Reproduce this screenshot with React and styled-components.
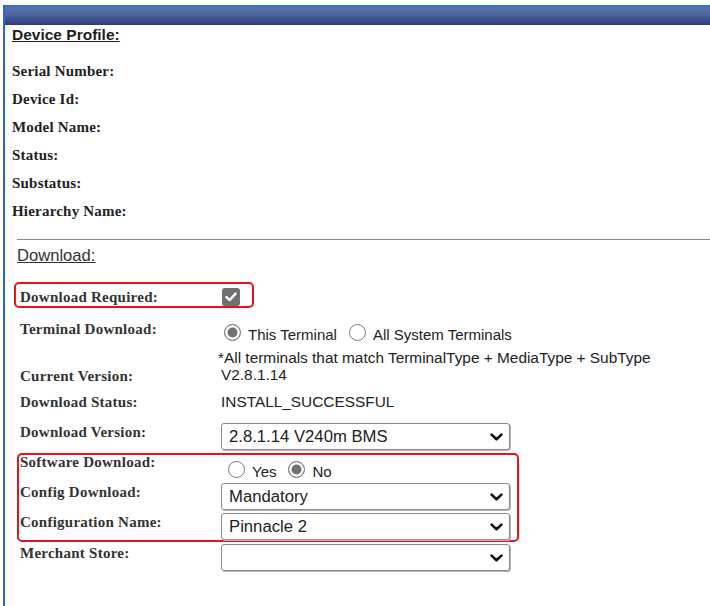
import React from "react";
import styled, { createGlobalStyle } from "styled-components";

const GlobalStyle = createGlobalStyle`
  html, body {
    margin: 0;
    padding: 0;
    background: #fff;
  }
  body {
    font-family: "Liberation Sans", Arial, sans-serif;
    color: #222;
  }
`;

const Frame = styled.div`
  margin: 5px 0 0 3px;
  border-left: 2px solid #2d67cc;
  min-height: 601px;
  box-sizing: border-box;
`;

const TitleBar = styled.div`
  height: 20px;
  box-sizing: border-box;
  border-top: 2px solid #3a6fc6;
  background: linear-gradient(to bottom, #5b74aa 0%, #4b63a0 45%, #2a3a78 100%);
`;

const ProfileTitle = styled.h2`
  margin: 0 0 12px 7px;
  font: bold 15.5px/20px "Liberation Sans", Arial, sans-serif;
  text-decoration: underline;
  color: #1e1e1e;
`;

const InfoList = styled.div`
  padding-left: 7px;
  display: flex;
  flex-direction: column;
`;

const InfoLabel = styled.div`
  font: bold 15px/28px "Liberation Serif", "Times New Roman", serif;
  letter-spacing: 0.2px;
  color: #222;
`;

const Divider = styled.hr`
  margin: 14px 0 6px 12px;
  height: 0;
  border: 0;
  border-top: 1px solid #8a8a8a;
`;

const SectionTitle = styled.div`
  margin: 0 0 22px 12px;
  font: 16.6px/20px "Liberation Sans", Arial, sans-serif;
  text-decoration: underline;
  color: #333;
`;

const Form = styled.div`
  padding-left: 15px;
  display: flex;
  flex-direction: column;
`;

const Highlight = styled.div`
  position: relative;
`;

// red annotation frame drawn over the rows
const Marker = styled.span`
  position: absolute;
  pointer-events: none;
  box-sizing: border-box;
  border: 2px solid #e8121a;
  border-radius: 5px;
  top: ${(p) => p.$top}px;
  left: ${(p) => p.$left}px;
  width: ${(p) => p.$w}px;
  height: ${(p) => p.$h}px;
`;

const Row = styled.div`
  display: grid;
  grid-template-columns: 201px 1fr;
  align-items: start;
  height: ${(p) => p.$h}px;
`;

const Label = styled.div`
  font: bold 15px/18px "Liberation Serif", "Times New Roman", serif;
  letter-spacing: 0.25px;
  color: #333;
  padding-top: ${(p) => p.$top || 0}px;
`;

const Value = styled.div`
  font: 15.4px/17px "Liberation Sans", Arial, sans-serif;
  color: #222;
`;

const Note = styled.div`
  margin-left: -3px;
`;

const CheckBox = styled.span`
  display: flex;
  align-items: center;
  justify-content: center;
  width: 18px;
  height: 18px;
  margin-left: 1px;
  border-radius: 3px;
  background: #707070;
`;

const RadioGroup = styled.div`
  display: flex;
  align-items: center;
  gap: 12px;
  margin: ${(p) => p.$top}px 0 0 ${(p) => p.$indent}px;
  font-size: 15px;
`;

const Option = styled.label`
  display: flex;
  align-items: center;
  gap: 7px;
`;

const Radio = styled.span`
  width: 17px;
  height: 17px;
  box-sizing: border-box;
  border-radius: 50%;
  border: 1.5px solid #7a7a7a;
  margin-bottom: 4px;
  background: ${(p) => (p.$on ? "#727272" : "#fff")};
  box-shadow: ${(p) => (p.$on ? "inset 0 0 0 2.5px #fff" : "none")};
`;

const SelectWrap = styled.div`
  position: relative;
  width: 289px;
  height: 27px;
`;

const Select = styled.select`
  appearance: none;
  width: 100%;
  height: 100%;
  box-sizing: border-box;
  margin: 0;
  padding: 0 28px 0 7px;
  border: 1px solid #8a8a8a;
  border-radius: 3px;
  box-shadow: 1px 1px 0 #b8b8b8;
  background: #fff;
  font: 16.7px "Liberation Sans", Arial, sans-serif;
  color: #222;
  outline: none;
`;

const Chevron = styled.svg`
  position: absolute;
  right: 7px;
  top: 10px;
  pointer-events: none;
`;

function Dropdown({ value }) {
  return (
    <SelectWrap>
      <Select value={value} onChange={() => {}}>
        <option value={value}>{value}</option>
      </Select>
      <Chevron width="13" height="8" viewBox="0 0 13 8">
        <polyline
          points="1.6,1.6 6.5,6.3 11.4,1.6"
          fill="none"
          stroke="#111"
          strokeWidth="2.6"
          strokeLinecap="round"
          strokeLinejoin="round"
        />
      </Chevron>
    </SelectWrap>
  );
}

function Choice({ on, children }) {
  return (
    <Option>
      <Radio $on={on} />
      {children}
    </Option>
  );
}

const profileFields = [
  "Serial Number:",
  "Device Id:",
  "Model Name:",
  "Status:",
  "Substatus:",
  "Hierarchy Name:",
];

export default function App() {
  return (
    <>
      <GlobalStyle />
      <Frame>
        <TitleBar />
        <ProfileTitle>Device Profile:</ProfileTitle>
        <InfoList>
          {profileFields.map((f) => (
            <InfoLabel key={f}>{f}</InfoLabel>
          ))}
        </InfoList>

        <Divider />
        <SectionTitle>Download:</SectionTitle>

        <Form>
          <Highlight>
            <Marker $top={-6} $left={-6} $w={240} $h={26} />
            <Row $h={32}>
              <Label>Download Required:</Label>
              <CheckBox>
                <svg width="12" height="10" viewBox="0 0 12 10">
                  <polyline
                    points="1.5,5.2 4.6,8.2 10.5,1.6"
                    fill="none"
                    stroke="#fff"
                    strokeWidth="2.4"
                    strokeLinecap="round"
                    strokeLinejoin="round"
                  />
                </svg>
              </CheckBox>
            </Row>
          </Highlight>

          <Row $h={29}>
            <Label>Terminal Download:</Label>
            <Value>
              <RadioGroup $top={4} $indent={3}>
                <Choice on>This Terminal</Choice>
                <Choice>All System Terminals</Choice>
              </RadioGroup>
            </Value>
          </Row>

          <Row $h={44}>
            <Label $top={18}>Current Version:</Label>
            <Value>
              <Note>*All terminals that match TerminalType + MediaType + SubType</Note>
              <div>V2.8.1.14</div>
            </Value>
          </Row>

          <Row $h={30}>
            <Label>Download Status:</Label>
            <Value>INSTALL_SUCCESSFUL</Value>
          </Row>

          <Row $h={30}>
            <Label>Download Version:</Label>
            <Dropdown value="2.8.1.14 V240m BMS" />
          </Row>

          <Highlight>
            <Marker $top={0} $left={-3} $w={502} $h={89} />
            <Row $h={30}>
              <Label>Software Download:</Label>
              <Value>
                <RadioGroup $top={8} $indent={7}>
                  <Choice>Yes</Choice>
                  <Choice on>No</Choice>
                </RadioGroup>
              </Value>
            </Row>
            <Row $h={30}>
              <Label>Config Download:</Label>
              <Dropdown value="Mandatory" />
            </Row>
            <Row $h={31}>
              <Label>Configuration Name:</Label>
              <Dropdown value="Pinnacle 2" />
            </Row>
          </Highlight>

          <Row $h={30}>
            <Label>Merchant Store:</Label>
            <Dropdown value="" />
          </Row>
        </Form>
      </Frame>
    </>
  );
}
